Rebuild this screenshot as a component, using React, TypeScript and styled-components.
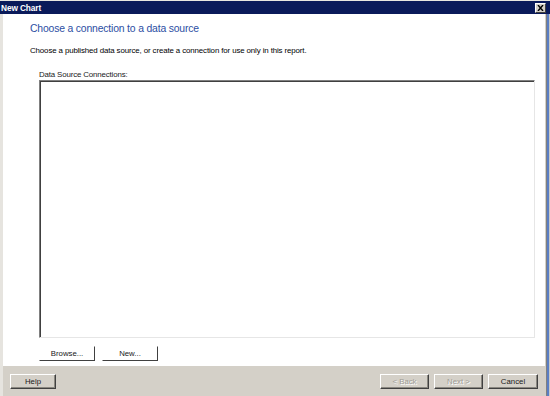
import styled, { createGlobalStyle } from 'styled-components';

const Global = createGlobalStyle`
  html, body {
    margin: 0;
    padding: 0;
    background: #ffffff;
  }
  body {
    font-family: "Liberation Sans", Arial, sans-serif;
  }
`;

const Window = styled.div`
  width: 550px;
  height: 396px;
  display: flex;
  flex-direction: column;
  background: #d4d0c8;
  border-top: 1px solid #e8e6e0;
  box-sizing: border-box;
  overflow: hidden;
`;

const TitleBar = styled.div`
  height: 13px;
  flex: none;
  background: #0a1a5a;
  color: #ffffff;
  display: flex;
  align-items: center;
  justify-content: space-between;
  padding: 0 4px 0 1px;
  font-size: 8.3px;
  font-weight: bold;
  letter-spacing: -0.1px;
`;

const CloseBox = styled.div`
  width: 11px;
  height: 10px;
  background: #d4d0c8;
  border: 1px solid;
  border-color: #ffffff #404040 #404040 #ffffff;
  box-sizing: border-box;
  display: flex;
  align-items: center;
  justify-content: center;
`;

const Frame = styled.div`
  flex: 1;
  display: flex;
  min-height: 0;
`;

const LeftEdge = styled.div`
  width: 3px;
  background: #e6e4df;
`;

const RightEdge = styled.div`
  width: 5px;
  display: flex;
  & > span {
    flex: 1;
  }
`;

const Body = styled.div`
  flex: 1;
  display: flex;
  flex-direction: column;
`;

const Page = styled.div`
  flex: 1;
  background: #ffffff;
  padding: 7px 10px 5px 27px;
  display: flex;
  flex-direction: column;
`;

const Heading = styled.div`
  color: #2c4ea3;
  font-size: 10.4px;
  height: 16px;
  line-height: 16px;
  letter-spacing: -0.17px;
`;

const Intro = styled.div`
  margin-top: 8px;
  font-size: 7.9px;
  color: #000000;
  height: 12px;
  line-height: 12px;
  letter-spacing: -0.12px;
`;

const Group = styled.div`
  flex: 1;
  display: flex;
  flex-direction: column;
  padding: 13px 0 0 9px;
`;

const Label = styled.div`
  font-size: 7.9px;
  color: #1a1a1a;
  height: 10px;
  line-height: 10px;
  letter-spacing: -0.15px;
`;

const ListBox = styled.div`
  flex: 1;
  border: 1px solid;
  border-color: #808080 #e6e6e6 #e6e6e6 #808080;
  box-shadow: inset 1px 1px 0 #404040;
  background: #ffffff;
`;

const ButtonRow = styled.div`
  display: flex;
  gap: 7px;
  margin-top: 8px;
  height: 15px;
`;

const Button = styled.button<{ $flat?: boolean; $width: number }>`
  width: ${(p) => p.$width}px;
  height: 15px;
  padding: 0;
  margin: 0;
  font-family: "Liberation Sans", Arial, sans-serif;
  font-size: 7.8px;
  color: ${(p) => (p.disabled ? '#a09d96' : '#202020')};
  background: ${(p) => (p.$flat ? '#ffffff' : '#d4d0c8')};
  border: 1px solid;
  border-color: #ffffff #404040 #404040 #ffffff;
  box-shadow: ${(p) => (p.$flat ? 'none' : 'inset -1px -1px 0 #8a8780')};
  text-shadow: ${(p) => (p.disabled ? '1px 1px 0 #ffffff' : 'none')};
  box-sizing: border-box;
  cursor: default;
`;

const Footer = styled.div`
  height: 30px;
  flex: none;
  background: #d4d0c8;
  display: flex;
  align-items: center;
  padding: 0 7px 0 7px;
  gap: 5px;
`;

const Spacer = styled.div`
  flex: 1;
`;

export default function App() {
  return (
    <>
      <Global />
      <Window>
        <TitleBar>
          <span>New Chart</span>
          <CloseBox>
            <svg width="7" height="6" viewBox="0 0 7 6">
              <path d="M1 0 L6 6 M6 0 L1 6" stroke="#000" strokeWidth="1.4" />
            </svg>
          </CloseBox>
        </TitleBar>
        <Frame>
          <LeftEdge />
          <Body>
            <Page>
              <Heading>Choose a connection to a data source</Heading>
              <Intro>
                Choose a published data source, or create a connection for use only in this report.
              </Intro>
              <Group>
                <Label>Data Source Connections:</Label>
                <ListBox />
                <ButtonRow>
                  <Button $flat $width={56}>Browse...</Button>
                  <Button $flat $width={56}>New...</Button>
                </ButtonRow>
              </Group>
            </Page>
            <Footer>
              <Button $width={46}>Help</Button>
              <Spacer />
              <Button $width={49} disabled>
                &lt; Back
              </Button>
              <Button $width={49} disabled>
                Next &gt;
              </Button>
              <Button $width={50}>Cancel</Button>
            </Footer>
          </Body>
          <RightEdge>
            <span style={{ background: '#d4d0c8' }} />
            <span style={{ background: '#808080' }} />
            <span style={{ background: '#5a7ec4' }} />
            <span style={{ background: '#5a7ec4' }} />
            <span style={{ background: '#c8c8c8' }} />
          </RightEdge>
        </Frame>
      </Window>
    </>
  );
}
